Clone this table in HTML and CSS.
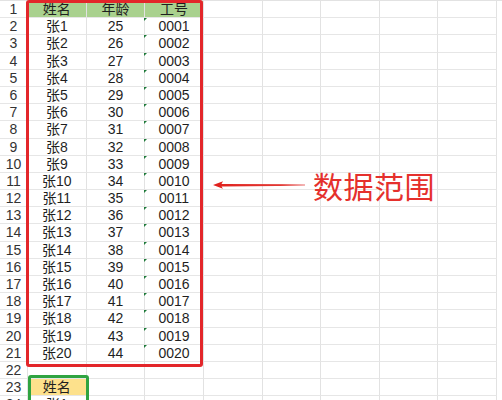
FILE: index.html
```html
<!DOCTYPE html>
<html lang="zh-CN">
<head>
<meta charset="utf-8">
<title>数据范围</title>
<link rel="stylesheet" href="styles.css">
</head>
<body>
<div class="page">
<div class="sheet">
<div class="rh">1</div><div class="c hd">姓名</div><div class="c hd">年龄</div><div class="c hd">工号</div><div class="c"></div><div class="c"></div><div class="c"></div><div class="c"></div><div class="c"></div>
<div class="rh">2</div><div class="c">张1</div><div class="c">25</div><div class="c t">0001</div><div class="c"></div><div class="c"></div><div class="c"></div><div class="c"></div><div class="c"></div>
<div class="rh">3</div><div class="c">张2</div><div class="c">26</div><div class="c t">0002</div><div class="c"></div><div class="c"></div><div class="c"></div><div class="c"></div><div class="c"></div>
<div class="rh">4</div><div class="c">张3</div><div class="c">27</div><div class="c t">0003</div><div class="c"></div><div class="c"></div><div class="c"></div><div class="c"></div><div class="c"></div>
<div class="rh">5</div><div class="c">张4</div><div class="c">28</div><div class="c t">0004</div><div class="c"></div><div class="c"></div><div class="c"></div><div class="c"></div><div class="c"></div>
<div class="rh">6</div><div class="c">张5</div><div class="c">29</div><div class="c t">0005</div><div class="c"></div><div class="c"></div><div class="c"></div><div class="c"></div><div class="c"></div>
<div class="rh">7</div><div class="c">张6</div><div class="c">30</div><div class="c t">0006</div><div class="c"></div><div class="c"></div><div class="c"></div><div class="c"></div><div class="c"></div>
<div class="rh">8</div><div class="c">张7</div><div class="c">31</div><div class="c t">0007</div><div class="c"></div><div class="c"></div><div class="c"></div><div class="c"></div><div class="c"></div>
<div class="rh">9</div><div class="c">张8</div><div class="c">32</div><div class="c t">0008</div><div class="c"></div><div class="c"></div><div class="c"></div><div class="c"></div><div class="c"></div>
<div class="rh">10</div><div class="c">张9</div><div class="c">33</div><div class="c t">0009</div><div class="c"></div><div class="c"></div><div class="c"></div><div class="c"></div><div class="c"></div>
<div class="rh">11</div><div class="c">张10</div><div class="c">34</div><div class="c t">0010</div><div class="c"></div><div class="c"></div><div class="c"></div><div class="c"></div><div class="c"></div>
<div class="rh">12</div><div class="c">张11</div><div class="c">35</div><div class="c t">0011</div><div class="c"></div><div class="c"></div><div class="c"></div><div class="c"></div><div class="c"></div>
<div class="rh">13</div><div class="c">张12</div><div class="c">36</div><div class="c t">0012</div><div class="c"></div><div class="c"></div><div class="c"></div><div class="c"></div><div class="c"></div>
<div class="rh">14</div><div class="c">张13</div><div class="c">37</div><div class="c t">0013</div><div class="c"></div><div class="c"></div><div class="c"></div><div class="c"></div><div class="c"></div>
<div class="rh">15</div><div class="c">张14</div><div class="c">38</div><div class="c t">0014</div><div class="c"></div><div class="c"></div><div class="c"></div><div class="c"></div><div class="c"></div>
<div class="rh">16</div><div class="c">张15</div><div class="c">39</div><div class="c t">0015</div><div class="c"></div><div class="c"></div><div class="c"></div><div class="c"></div><div class="c"></div>
<div class="rh">17</div><div class="c">张16</div><div class="c">40</div><div class="c t">0016</div><div class="c"></div><div class="c"></div><div class="c"></div><div class="c"></div><div class="c"></div>
<div class="rh">18</div><div class="c">张17</div><div class="c">41</div><div class="c t">0017</div><div class="c"></div><div class="c"></div><div class="c"></div><div class="c"></div><div class="c"></div>
<div class="rh">19</div><div class="c">张18</div><div class="c">42</div><div class="c t">0018</div><div class="c"></div><div class="c"></div><div class="c"></div><div class="c"></div><div class="c"></div>
<div class="rh">20</div><div class="c">张19</div><div class="c">43</div><div class="c t">0019</div><div class="c"></div><div class="c"></div><div class="c"></div><div class="c"></div><div class="c"></div>
<div class="rh">21</div><div class="c">张20</div><div class="c">44</div><div class="c t">0020</div><div class="c"></div><div class="c"></div><div class="c"></div><div class="c"></div><div class="c"></div>
<div class="rh">22</div><div class="c"></div><div class="c"></div><div class="c"></div><div class="c"></div><div class="c"></div><div class="c"></div><div class="c"></div><div class="c"></div>
<div class="rh">23</div><div class="c yl">姓名</div><div class="c"></div><div class="c"></div><div class="c"></div><div class="c"></div><div class="c"></div><div class="c"></div><div class="c"></div>
<div class="rh">24</div><div class="c">张1</div><div class="c"></div><div class="c"></div><div class="c"></div><div class="c"></div><div class="c"></div><div class="c"></div><div class="c"></div>
</div>
<div class="range-box"></div>
<div class="pick-box"></div>
<svg class="arrow" width="96" height="14" viewBox="0 0 96 14">
<defs>
<linearGradient id="fade" x1="0" x2="1" y1="0" y2="0">
<stop offset="0" stop-color="#e0201c"/>
<stop offset="0.75" stop-color="#e23a35"/>
<stop offset="1" stop-color="#f0a0a0"/>
</linearGradient>
</defs>
<polygon points="2,7 12,3.2 10.5,6 94,6.3 94,7.7 10.5,8.4 12,10.8" fill="url(#fade)"/>
</svg>
<div class="label">数据范围</div>
</div>
</body>
</html>
```
FILE: styles.css
```css
html, body {
  margin: 0;
  padding: 0;
  background: #ffffff;
}
.page {
  position: relative;
  width: 502px;
  height: 400px;
  overflow: hidden;
  font-family: "Liberation Sans", "Noto Sans CJK SC", sans-serif;
  color: #1f1f1f;
}
.sheet {
  display: grid;
  grid-template-columns: 28px repeat(8, 58.65px);
  grid-auto-rows: 17.2px;
  border-top: 1px solid #e2e2e2;
}
.rh, .c {
  box-sizing: border-box;
  border-bottom: 1px solid #e6e6e6;
  border-right: 1px solid #e2e2e2;
  text-align: center;
  font-size: 14px;
  line-height: 16px;
  white-space: nowrap;
  position: relative;
  overflow: hidden;
}
.rh {
  color: #333333;
}
.hd {
  background: #a9d18e;
}
.yl {
  background: #fde18c;
}
.t {
  overflow: visible;
}
.t::before {
  content: "";
  position: absolute;
  left: -1px;
  top: 0;
  width: 0;
  height: 0;
  border-top: 3px solid #1f7a3a;
  border-right: 3px solid transparent;
}
.range-box {
  position: absolute;
  left: 26px;
  top: 0;
  width: 171px;
  height: 361px;
  border: 3px solid #e3262a;
  border-radius: 3px;
}
.pick-box {
  position: absolute;
  left: 28px;
  top: 375px;
  width: 55px;
  height: 40px;
  border: 3px solid #2fa441;
  border-radius: 3px;
}
.arrow {
  position: absolute;
  left: 211px;
  top: 178px;
}
.label {
  position: absolute;
  left: 313px;
  top: 170px;
  font-family: "Noto Sans CJK SC", sans-serif;
  font-size: 30px;
  line-height: 30px;
  color: #e5302c;
  letter-spacing: 0.5px;
}
```
